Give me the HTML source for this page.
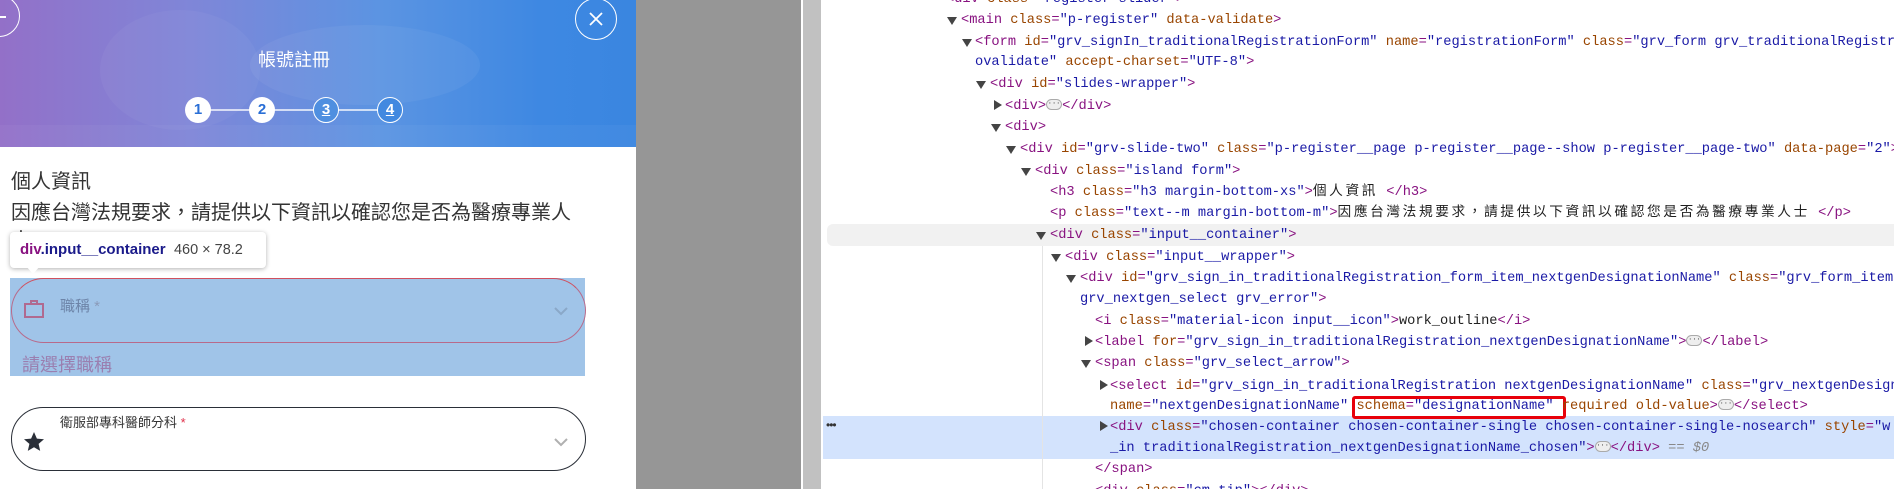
<!DOCTYPE html>
<html><head><meta charset="utf-8"><style>
*{margin:0;padding:0;box-sizing:border-box}
html,body{width:1894px;height:489px;overflow:hidden}
body{background:#fff;position:relative;font-family:"Liberation Sans","Noto Sans CJK TC",sans-serif}
#wrap{position:absolute;left:0;top:0;width:1894px;height:489px;overflow:hidden}
.abs{position:absolute}
#left{left:0;top:0;width:636px;height:489px;background:#fff;overflow:hidden}
#hdr{left:0;top:0;width:636px;height:147px;background:linear-gradient(90deg,#9370c8 0%,#7f86d8 30%,#5b94e2 60%,#3e88e2 85%,#3a86e0 100%)}
.circ{position:absolute;border-radius:50%;}
#gray{left:636px;top:0;width:165px;height:489px;background:#969696}
#wl{left:801px;top:0;width:2px;height:489px;background:#fff}
#lg{left:803px;top:0;width:18px;height:489px;background:#c1c1c1}
.ln{position:absolute;font-family:"Liberation Mono","Noto Sans CJK TC",monospace;font-size:13.7px;line-height:21px;white-space:pre;color:#1f1f1f}
.t{color:#881280}.a{color:#994500}.v{color:#1a1aa6}
.cj{letter-spacing:2.6px}
.tri{position:absolute;width:0;height:0}
.dn{border-left:5px solid transparent;border-right:5px solid transparent;border-top:8px solid #444}
.rt{border-top:5px solid transparent;border-bottom:5px solid transparent;border-left:8px solid #444}
.el{display:inline-block;width:16px;height:11px;border:1px solid #aaa;border-radius:6px;background:#eee;vertical-align:middle;position:relative;top:-1px;font-size:7px;line-height:8px;text-align:center;color:#333;letter-spacing:0}
</style></head><body><div id="wrap">
<div id="left" class="abs">
  <div id="hdr" class="abs">
    <div class="abs" style="left:100px;top:10px;width:160px;height:120px;border-radius:50%;background:rgba(255,255,255,.04)"></div>
    <div class="abs" style="left:250px;top:25px;width:230px;height:80px;border-radius:50%;background:rgba(255,255,255,.05)"></div>
    <div class="abs" style="left:0;top:125px;width:636px;height:22px;background:rgba(255,255,255,.04)"></div>
  </div>
  <div class="circ" style="left:-22px;top:-5px;width:42px;height:42px;border:1.5px solid #fff"></div>
  <div class="abs" style="left:0;top:16px;width:6px;height:1.5px;background:#fff"></div>
  <div class="circ" style="left:575px;top:-2px;width:42px;height:42px;border:1.5px solid #fff"></div>
  <svg class="abs" style="left:586px;top:9px" width="20" height="20"><path d="M4 4L16 16M16 4L4 16" stroke="#fff" stroke-width="1.8"/></svg>
  <div class="abs" style="left:244px;top:47px;width:100px;text-align:center;color:#fff;font-size:18px;line-height:26px">帳號註冊</div>
  <div class="abs" style="left:198px;top:109px;width:192px;height:2px;background:rgba(255,255,255,.7)"></div>
  <div class="circ" style="left:185px;top:97px;width:26px;height:26px;background:#fff;color:#2a6fd6;font-size:15px;font-weight:bold;text-align:center;line-height:26px">1</div>
  <div class="circ" style="left:249px;top:97px;width:26px;height:26px;background:#fff;color:#2a6fd6;font-size:15px;font-weight:bold;text-align:center;line-height:26px">2</div>
  <div class="circ" style="left:313px;top:97px;width:26px;height:26px;border:1.5px solid #fff;background:#4f8fe0;color:#fff;font-size:15px;font-weight:bold;text-align:center;line-height:23px;text-decoration:underline">3</div>
  <div class="circ" style="left:377px;top:97px;width:26px;height:26px;border:1.5px solid #fff;background:#4289e0;color:#fff;font-size:15px;font-weight:bold;text-align:center;line-height:23px;text-decoration:underline">4</div>

  <div class="abs" style="left:11px;top:168px;font-size:20px;line-height:28px;color:#333">個人資訊</div>
  <div class="abs" style="left:11px;top:199px;width:572px;font-size:20px;line-height:28px;color:#333">因應台灣法規要求，請提供以下資訊以確認您是否為醫療專業人士</div>

  <div class="abs" style="left:10px;top:278px;width:575px;height:98px;background:#a0c4e8"></div>
  <div class="abs" style="left:11px;top:278px;width:575px;height:65px;border:1px solid #b86a8a;border-top-color:#d0505e;border-radius:33px"></div>
  <svg class="abs" style="left:23px;top:298px" width="22" height="22"><rect x="2" y="6" width="18" height="13" fill="none" stroke="#b06a90" stroke-width="2"/><path d="M8 6V3h6v3" fill="none" stroke="#b06a90" stroke-width="2"/></svg>
  <div class="abs" style="left:60px;top:297px;font-size:15px;line-height:20px;color:#6d84a8">職稱 <span style="color:#8a9ab8">*</span></div>
  <svg class="abs" style="left:554px;top:306px" width="14" height="10"><path d="M1 2L7 8L13 2" fill="none" stroke="#8aa8c8" stroke-width="2"/></svg>
  <div class="abs" style="left:22px;top:352px;font-size:18px;line-height:26px;color:#9a7fb0">請選擇職稱</div>

  <div class="abs" style="left:11px;top:407px;width:575px;height:64px;border:1px solid #2a2f38;border-radius:33px"></div>
  <svg class="abs" style="left:22px;top:430px" width="24" height="24"><path d="M12 2l2.9 6.6 7.1.6-5.4 4.7 1.6 7L12 17.2 5.8 20.9l1.6-7L2 9.2l7.1-.6z" fill="#2a2f38"/></svg>
  <div class="abs" style="left:60px;top:414px;font-size:13px;line-height:18px;color:#333">衛服部專科醫師分科 <span style="color:#e0304a">*</span></div>
  <svg class="abs" style="left:554px;top:437px" width="14" height="10"><path d="M1 2L7 8L13 2" fill="none" stroke="#b0b0b0" stroke-width="2"/></svg>

  <div class="abs" style="left:10px;top:232px;width:256px;height:36px;background:#fff;border-radius:4px;box-shadow:0 1px 5px rgba(0,0,0,.3)"></div>
  <div class="abs" style="left:26px;top:266px;width:0;height:0;border-left:7px solid transparent;border-right:7px solid transparent;border-top:8px solid #fff"></div>
  <div class="abs" style="left:20px;top:240px;font-size:15px;line-height:20px;white-space:nowrap"><b style="color:#1a1a8a"><span style="color:#881280">div</span>.input__container</b>&nbsp;&nbsp;<span style="color:#444;font-size:14.5px">460 × 78.2</span></div>
</div>

<div id="gray" class="abs"></div><div id="wl" class="abs"></div><div id="lg" class="abs"></div>

<div class="abs" style="left:827px;top:224px;width:1067px;height:22px;background:#f1f1f1;border-radius:6px 0 0 6px"></div>
<div class="abs" style="left:823px;top:416px;width:1071px;height:43px;background:#d3e3fd"></div>
<div class="abs" style="left:1042px;top:246px;width:1px;height:243px;background:#e4e4e4"></div>
<div class="abs" style="left:826px;top:418px;font-size:12px;color:#333;letter-spacing:-1px">•••</div>
<div class="abs" style="left:1352px;top:396px;width:214px;height:23px;border:3px solid #e8000a;border-radius:3px"></div>

<div class="ln" style="left:946px;top:-11px"><span class="t">&lt;div</span> <span class="a">class</span><span class="t">=</span><span class="v">"register-slider"</span><span class="t">&gt;</span></div>
<div class="tri dn" style="left:947px;top:17px"></div>
<div class="ln" style="left:961px;top:10px"><span class="t">&lt;main</span> <span class="a">class</span><span class="t">=</span><span class="v">"p-register"</span> <span class="a">data-validate</span><span class="t">&gt;</span></div>
<div class="tri dn" style="left:962px;top:39px"></div>
<div class="ln" style="left:975px;top:32px"><span class="t">&lt;form</span> <span class="a">id</span><span class="t">=</span><span class="v">"grv_signIn_traditionalRegistrationForm"</span> <span class="a">name</span><span class="t">=</span><span class="v">"registrationForm"</span> <span class="a">class</span><span class="t">=</span><span class="v">"grv_form grv_traditionalRegistrationForm"</span> <span class="a">n</span></div>
<div class="ln" style="left:975px;top:52px"><span class="v">ovalidate"</span> <span class="a">accept-charset</span><span class="t">=</span><span class="v">"UTF-8"</span><span class="t">&gt;</span></div>
<div class="tri dn" style="left:976px;top:81px"></div>
<div class="ln" style="left:990px;top:74px"><span class="t">&lt;div</span> <span class="a">id</span><span class="t">=</span><span class="v">"slides-wrapper"</span><span class="t">&gt;</span></div>
<div class="tri rt" style="left:994px;top:100px"></div>
<div class="ln" style="left:1005px;top:96px"><span class="t">&lt;div&gt;</span><span class="el">···</span><span class="t">&lt;/div&gt;</span></div>
<div class="tri dn" style="left:991px;top:124px"></div>
<div class="ln" style="left:1005px;top:117px"><span class="t">&lt;div&gt;</span></div>
<div class="tri dn" style="left:1006px;top:146px"></div>
<div class="ln" style="left:1020px;top:139px"><span class="t">&lt;div</span> <span class="a">id</span><span class="t">=</span><span class="v">"grv-slide-two"</span> <span class="a">class</span><span class="t">=</span><span class="v">"p-register__page p-register__page--show p-register__page-two"</span> <span class="a">data-page</span><span class="t">=</span><span class="v">"2"</span><span class="t">&gt;</span></div>
<div class="tri dn" style="left:1021px;top:168px"></div>
<div class="ln" style="left:1035px;top:161px"><span class="t">&lt;div</span> <span class="a">class</span><span class="t">=</span><span class="v">"island form"</span><span class="t">&gt;</span></div>
<div class="ln" style="left:1050px;top:182px"><span class="t">&lt;h3</span> <span class="a">class</span><span class="t">=</span><span class="v">"h3 margin-bottom-xs"</span><span class="t">&gt;</span><span class="cj">個人資訊</span> <span class="t">&lt;/h3&gt;</span></div>
<div class="ln" style="left:1050px;top:203px"><span class="t">&lt;p</span> <span class="a">class</span><span class="t">=</span><span class="v">"text--m margin-bottom-m"</span><span class="t">&gt;</span><span class="cj">因應台灣法規要求，請提供以下資訊以確認您是否為醫療專業人士</span> <span class="t">&lt;/p&gt;</span></div>
<div class="tri dn" style="left:1036px;top:232px"></div>
<div class="ln" style="left:1050px;top:225px"><span class="t">&lt;div</span> <span class="a">class</span><span class="t">=</span><span class="v">"input__container"</span><span class="t">&gt;</span></div>
<div class="tri dn" style="left:1051px;top:254px"></div>
<div class="ln" style="left:1065px;top:247px"><span class="t">&lt;div</span> <span class="a">class</span><span class="t">=</span><span class="v">"input__wrapper"</span><span class="t">&gt;</span></div>
<div class="tri dn" style="left:1066px;top:275px"></div>
<div class="ln" style="left:1080px;top:268px"><span class="t">&lt;div</span> <span class="a">id</span><span class="t">=</span><span class="v">"grv_sign_in_traditionalRegistration_form_item_nextgenDesignationName"</span> <span class="a">class</span><span class="t">=</span><span class="v">"grv_form_item</span></div>
<div class="ln" style="left:1080px;top:289px"><span class="v">grv_nextgen_select grv_error"</span><span class="t">&gt;</span></div>
<div class="ln" style="left:1095px;top:311px"><span class="t">&lt;i</span> <span class="a">class</span><span class="t">=</span><span class="v">"material-icon input__icon"</span><span class="t">&gt;</span>work_outline<span class="t">&lt;/i&gt;</span></div>
<div class="tri rt" style="left:1085px;top:336px"></div>
<div class="ln" style="left:1095px;top:332px"><span class="t">&lt;label</span> <span class="a">for</span><span class="t">=</span><span class="v">"grv_sign_in_traditionalRegistration_nextgenDesignationName"</span><span class="t">&gt;</span><span class="el">···</span><span class="t">&lt;/label&gt;</span></div>
<div class="tri dn" style="left:1081px;top:360px"></div>
<div class="ln" style="left:1095px;top:353px"><span class="t">&lt;span</span> <span class="a">class</span><span class="t">=</span><span class="v">"grv_select_arrow"</span><span class="t">&gt;</span></div>
<div class="tri rt" style="left:1100px;top:380px"></div>
<div class="ln" style="left:1110px;top:376px"><span class="t">&lt;select</span> <span class="a">id</span><span class="t">=</span><span class="v">"grv_sign_in_traditionalRegistration nextgenDesignationName"</span> <span class="a">class</span><span class="t">=</span><span class="v">"grv_nextgenDesignationName"</span></div>
<div class="ln" style="left:1110px;top:396px"><span class="a">name</span><span class="t">=</span><span class="v">"nextgenDesignationName"</span> <span class="a">schema</span><span class="t">=</span><span class="v">"designationName"</span> <span class="a">required old-value</span><span class="t">&gt;</span><span class="el">···</span><span class="t">&lt;/select&gt;</span></div>
<div class="tri rt" style="left:1100px;top:421px"></div>
<div class="ln" style="left:1110px;top:417px"><span class="t">&lt;div</span> <span class="a">class</span><span class="t">=</span><span class="v">"chosen-container chosen-container-single chosen-container-single-nosearch"</span> <span class="a">style</span><span class="t">=</span><span class="v">"w</span></div>
<div class="ln" style="left:1110px;top:438px"><span class="v">_in traditionalRegistration_nextgenDesignationName_chosen"</span><span class="t">&gt;</span><span class="el">···</span><span class="t">&lt;/div&gt;</span> <i style="color:#888">== $0</i></div>
<div class="ln" style="left:1095px;top:459px"><span class="t">&lt;/span&gt;</span></div>
<div class="ln" style="left:1095px;top:481px"><span class="t">&lt;div</span> <span class="a">class</span><span class="t">=</span><span class="v">"cm-tip"</span><span class="t">&gt;&lt;/div&gt;</span></div>
</div></body></html>
